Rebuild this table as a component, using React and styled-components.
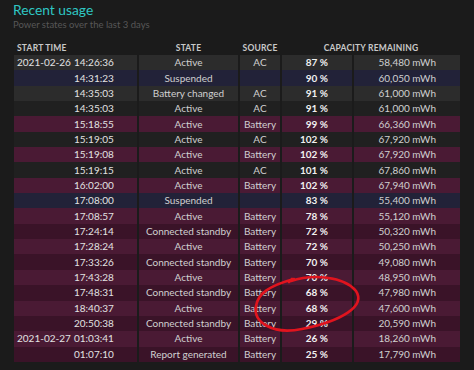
import React from 'react';
import styled, { createGlobalStyle, css } from 'styled-components';

const GlobalStyle = createGlobalStyle`
  html, body {
    margin: 0;
    padding: 0;
    background: #1b1b1b;
  }
  body {
    font-family: Lato, "Open Sans", sans-serif;
  }
`;

const Page = styled.div`
  position: relative;
  width: 474px;
  height: 370px;
  overflow: hidden;
  background: #1b1b1b;
  padding: 1px 0 0 12px;
  box-sizing: border-box;
`;

const Title = styled.h1`
  margin: 0 0 0 1px;
  font-size: 13.8px;
  line-height: 18px;
  font-weight: 400;
  color: #2fc7c4;
`;

const Subtitle = styled.div`
  margin-left: 1px;
  font-size: 9.5px;
  line-height: 12px;
  color: #575757;
`;

const Table = styled.table`
  margin-top: 9px;
  border-collapse: separate;
  border-spacing: 2px 0;
  table-layout: fixed;
  width: 450px;
`;

const HeadCell = styled.th`
  height: 15px;
  padding: 0;
  font-size: 8.5px;
  font-weight: 700;
  letter-spacing: 0.2px;
  color: #c9c9c9;
  text-align: ${p => p.$align || 'center'};
  padding-left: ${p => (p.$align === 'left' ? '3px' : '0')};
`;

const rowColors = {
  grey: ['#2c2c2c', '#202020'],
  suspended: ['#222238', '#222238'],
  battery: ['#4a1a34', '#3a1328']
};

const Row = styled.tr`
  height: 15.35px;
  td {
    ${p => css`
      background: ${rowColors[p.$kind][p.$even ? 1 : 0]};
    `}
  }
`;

const Cell = styled.td`
  padding: 0;
  font-size: 10px;
  line-height: 15px;
  color: #d0d0d0;
  white-space: nowrap;
  text-align: ${p => p.$align || 'center'};
  padding-right: ${p => (p.$align === 'right' ? '24px' : '0')};
  ${p =>
    p.$strong &&
    css`
      color: #f0f0f0;
      font-weight: 700;
    `}
`;

const TimeCell = styled.td`
  padding: 0 0 0 3px;
  font-size: 10px;
  line-height: 15px;
  color: #e2e2e2;
  white-space: nowrap;
`;

const DatePart = styled.span`
  display: inline-block;
  width: 57px;
`;

const Annotation = styled.svg`
  position: absolute;
  left: 0;
  top: 0;
  pointer-events: none;
`;

const rows = [
  ['2021-02-26', '14:26:36', 'Active', 'AC', '87 %', '58,480 mWh'],
  ['', '14:31:23', 'Suspended', '', '90 %', '60,050 mWh'],
  ['', '14:35:03', 'Battery changed', 'AC', '91 %', '61,000 mWh'],
  ['', '14:35:03', 'Active', 'AC', '91 %', '61,000 mWh'],
  ['', '15:18:55', 'Active', 'Battery', '99 %', '66,360 mWh'],
  ['', '15:19:05', 'Active', 'AC', '102 %', '67,920 mWh'],
  ['', '15:19:08', 'Active', 'Battery', '102 %', '67,920 mWh'],
  ['', '15:19:15', 'Active', 'AC', '101 %', '67,860 mWh'],
  ['', '16:02:00', 'Active', 'Battery', '102 %', '67,940 mWh'],
  ['', '17:08:00', 'Suspended', '', '83 %', '55,400 mWh'],
  ['', '17:08:57', 'Active', 'Battery', '78 %', '55,120 mWh'],
  ['', '17:24:14', 'Connected standby', 'Battery', '72 %', '50,320 mWh'],
  ['', '17:28:24', 'Active', 'Battery', '72 %', '50,250 mWh'],
  ['', '17:33:26', 'Connected standby', 'Battery', '70 %', '49,080 mWh'],
  ['', '17:43:28', 'Active', 'Battery', '70 %', '48,950 mWh'],
  ['', '17:48:31', 'Connected standby', 'Battery', '68 %', '47,980 mWh'],
  ['', '18:40:37', 'Active', 'Battery', '68 %', '47,600 mWh'],
  ['', '20:50:38', 'Connected standby', 'Battery', '29 %', '20,590 mWh'],
  ['2021-02-27', '01:03:41', 'Active', 'Battery', '26 %', '18,260 mWh'],
  ['', '01:07:10', 'Report generated', 'Battery', '25 %', '17,790 mWh']
];

const kindOf = (state, source) => {
  if (state === 'Suspended') return 'suspended';
  if (source === 'Battery') return 'battery';
  return 'grey';
};

export default function App() {
  return (
    <Page>
      <GlobalStyle />
      <Title>Recent usage</Title>
      <Subtitle>Power states over the last 3 days</Subtitle>
      <Table>
        <colgroup>
          <col style={{ width: 123 }} />
          <col style={{ width: 99 }} />
          <col style={{ width: 40 }} />
          <col style={{ width: 70 }} />
          <col style={{ width: 106 }} />
        </colgroup>
        <thead>
          <tr>
            <HeadCell $align="left">START TIME</HeadCell>
            <HeadCell>STATE</HeadCell>
            <HeadCell>SOURCE</HeadCell>
            <HeadCell colSpan={2}>CAPACITY REMAINING</HeadCell>
          </tr>
        </thead>
        <tbody>
          {rows.map(([date, time, state, source, pct, mwh], i) => (
            <Row key={i} $kind={kindOf(state, source)} $even={i % 2 === 1}>
              <TimeCell>
                <DatePart>{date}</DatePart>
                {time}
              </TimeCell>
              <Cell>{state}</Cell>
              <Cell>{source}</Cell>
              <Cell $align="right" $strong>
                {pct}
              </Cell>
              <Cell $align="right">{mwh}</Cell>
            </Row>
          ))}
        </tbody>
      </Table>
      <Annotation width="474" height="370" viewBox="0 0 474 370">
        <path
          d="M291 281 C312 274 344 276 356 291 C366 306 342 321 302 329 C272 335 253 322 256 306 C258 294 268 286 294 279 M289 282 l3 -3"
          fill="none"
          stroke="#e0141e"
          strokeWidth="2.6"
          strokeLinecap="round"
          strokeLinejoin="round"
        />
      </Annotation>
    </Page>
  );
}
